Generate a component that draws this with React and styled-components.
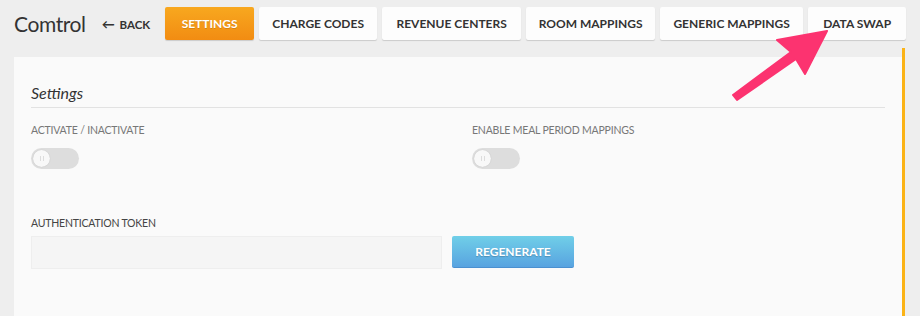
import React from 'react';
import styled, { createGlobalStyle } from 'styled-components';

const Global = createGlobalStyle`
    html, body {
        margin: 0;
        padding: 0;
        background: #eeeeee;
        font-family: Lato, "Open Sans", sans-serif;
    }
    * { box-sizing: border-box; }
`;

const tabs = [
    { label: 'SETTINGS', width: 89, active: true },
    { label: 'CHARGE CODES', width: 118 },
    { label: 'REVENUE CENTERS', width: 139 },
    { label: 'ROOM MAPPINGS', width: 129 },
    { label: 'GENERIC MAPPINGS', width: 143 },
    { label: 'DATA SWAP', width: 98 },
];

function Toggle() {
    return (
        <Track>
            <Knob>
                <Grip />
            </Knob>
        </Track>
    );
}

function Arrow() {
    return (
        <ArrowSvg width="110" height="90" viewBox="0 0 110 90">
            <polygon
                points="97,10 47,19 61,31 3,74 7,79 66,38 75,53"
                fill="#fc3370"
                stroke="#fc3370"
                strokeWidth="2"
                strokeLinejoin="round"
            />
        </ArrowSvg>
    );
}

export default function App() {
    return (
        <Page>
            <Global />
            <Header>
                <Brand>Comtrol</Brand>
                <Back>
                    <span>&#8592;</span> BACK
                </Back>
                <Tabs>
                    {tabs.map((t) => (
                        <Tab key={t.label} $active={t.active} $w={t.width}>
                            {t.label}
                        </Tab>
                    ))}
                </Tabs>
            </Header>
            <Frame>
                <Panel>
                    <Title>Settings</Title>
                    <Row>
                        <Field>
                            <Label>ACTIVATE / INACTIVATE</Label>
                            <Toggle />
                        </Field>
                        <Field>
                            <Label>ENABLE MEAL PERIOD MAPPINGS</Label>
                            <Toggle />
                        </Field>
                    </Row>
                    <TokenLabel>AUTHENTICATION TOKEN</TokenLabel>
                    <TokenRow>
                        <TokenInput />
                        <Regenerate>REGENERATE</Regenerate>
                    </TokenRow>
                </Panel>
            </Frame>
            <Arrow />
        </Page>
    );
}

const Page = styled.div`
    position: relative;
    width: 920px;
    height: 316px;
    overflow: hidden;
    background: #eeeeee;
`;

const Header = styled.div`
    display: flex;
    align-items: center;
    height: 48px;
    padding: 0 0 1px 14px;
`;

const Brand = styled.div`
    font-size: 21px;
    color: #333;
    font-weight: 400;
    letter-spacing: -0.4px;
    margin-right: 16px;
`;

const Back = styled.div`
    font-size: 11.5px;
    font-weight: 700;
    color: #333;
    margin-right: 15px;
    span {
        font-size: 13px;
        margin-right: 2px;
    }
`;

const Tabs = styled.div`
    display: flex;
    gap: 5px;
`;

const Tab = styled.div`
    width: ${(p) => p.$w}px;
    height: 33px;
    display: flex;
    align-items: center;
    justify-content: center;
    font-size: 12px;
    font-weight: 700;
    color: ${(p) => (p.$active ? '#fff' : '#333')};
    background: ${(p) =>
        p.$active ? 'linear-gradient(#f8a81f, #f28c12)' : '#fdfdfd'};
    border-radius: 2px;
    box-shadow: 0 1px 1px rgba(0, 0, 0, 0.15);
    ${(p) => p.$active && 'text-shadow: 0 1px 0 rgba(0,0,0,0.15);'}
`;

const Frame = styled.div`
    margin-left: 14px;
    width: 891px;
    height: 268px;
    padding-top: 9px;
    border-right: 3px solid #fbb316;
`;

const Panel = styled.div`
    background: #fafafa;
    height: 100%;
    padding: 26px 17px 0 17px;
`;

const Title = styled.div`
    font-size: 16px;
    font-style: italic;
    color: #333;
    padding-bottom: 5px;
    border-bottom: 1px solid #e2e2e2;
`;

const Row = styled.div`
    display: grid;
    grid-template-columns: 441px 1fr;
    margin-top: 16px;
`;

const Field = styled.div`
    display: flex;
    flex-direction: column;
    gap: 12px;
`;

const Label = styled.div`
    font-size: 10.5px;
    letter-spacing: -0.2px;
    color: #777;
`;

const Track = styled.div`
    width: 48px;
    height: 21px;
    border-radius: 11px;
    background: #dddddd;
    padding: 2px;
`;

const Knob = styled.div`
    width: 17px;
    height: 17px;
    border-radius: 50%;
    background: #f8f8f8;
    display: flex;
    align-items: center;
    justify-content: center;
    box-shadow: 0 0 1px rgba(0, 0, 0, 0.2);
`;

const Grip = styled.div`
    width: 4px;
    height: 5px;
    border-left: 1px solid #ddd;
    border-right: 1px solid #ddd;
`;

const TokenLabel = styled.div`
    font-size: 10.5px;
    letter-spacing: -0.2px;
    color: #444;
    margin-top: 48px;
`;

const TokenRow = styled.div`
    display: flex;
    gap: 10px;
    margin-top: 7px;
`;

const TokenInput = styled.div`
    width: 411px;
    height: 33px;
    background: #f5f5f5;
    border: 1px solid #eeeeee;
`;

const Regenerate = styled.div`
    width: 122px;
    height: 32px;
    border-radius: 2px;
    background: linear-gradient(#70cfe8, #58a3e0);
    border-bottom: 1px solid #4a90d0;
    color: #fff;
    font-size: 12px;
    font-weight: 700;
    display: flex;
    align-items: center;
    justify-content: center;
    text-shadow: 0 1px 1px rgba(0, 0, 0, 0.2);
`;

const ArrowSvg = styled.svg`
    position: absolute;
    left: 730px;
    top: 21px;
`;
